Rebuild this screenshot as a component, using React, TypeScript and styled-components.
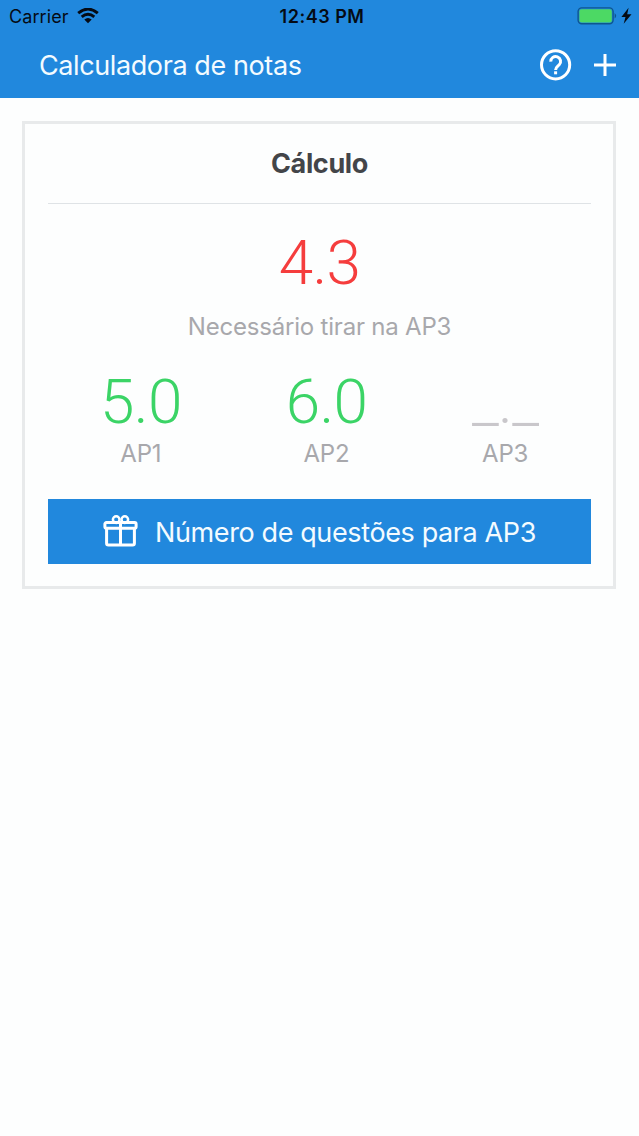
import React from "react";
import styled, { createGlobalStyle } from "styled-components";

const GlobalStyle = createGlobalStyle`
  * { box-sizing: border-box; }
  body { margin: 0; background: #fdfefe; font-family: Inter, "Liberation Sans", sans-serif; }
`;

const Screen = styled.main`
  min-height: 1136px;
  display: flex;
  flex-direction: column;
`;

const Header = styled.header`
  height: 98px;
  background: #2188dd;
`;

const StatusBar = styled.div`
  height: 32px;
  padding: 0 7px 0 9px;
  display: grid;
  grid-template-columns: 1fr auto 1fr;
  align-items: center;
  color: #050b14;
`;

const Carrier = styled.div`
  display: flex;
  align-items: center;
  gap: 8px;
  font-size: 18px;
  letter-spacing: 0.1px;
`;

const Clock = styled.div`
  padding-left: 3px;
  font-size: 18px;
  font-weight: 600;
  letter-spacing: 0.5px;
`;

const Power = styled.div`
  display: flex;
  justify-content: flex-end;
`;

const Toolbar = styled.div`
  height: 66px;
  padding: 0 22px 0 39px;
  display: flex;
  align-items: center;
  color: #fff;
`;

const PageTitle = styled.h1`
  flex: 1;
  margin: 0;
  font-size: 27px;
  font-weight: 400;
  letter-spacing: -0.4px;
  color: #f3fbff;
`;

const IconButton = styled.button`
  margin: 0 0 0 21px;
  padding: 0;
  border: 0;
  background: none;
  color: inherit;
  display: flex;
`;

const Card = styled.section`
  margin: 23px 23px 0 22px;
  height: 468px;
  border: 3px solid #e8eaeb;
  padding: 0 22px 0 23px;
  display: flex;
  flex-direction: column;
`;

const CardTitle = styled.h2`
  margin: 0;
  height: 80px;
  border-bottom: 1px solid #dfe3e6;
  font-size: 27px;
  line-height: 79px;
  font-weight: 700;
  letter-spacing: -0.35px;
  text-align: center;
  color: #434549;
`;

const Grade = styled.div<{ $color: string; $width?: number }>`
  width: ${(p) => (p.$width ? p.$width + "px" : "auto")};
  height: 72px;
  display: flex;
  justify-content: center;
  font-family: Roboto, "Liberation Sans", sans-serif;
  font-size: 62px;
  line-height: 72px;
  font-weight: 300;
  letter-spacing: -0.7px;
  color: ${(p) => p.$color};
`;

const Caption = styled.div`
  height: 30px;
  line-height: 30px;
  font-size: 24px;
  letter-spacing: -0.2px;
  text-align: center;
  color: #a8a8ac;
`;

const Needed = styled.div`
  margin-top: 23px;
  display: flex;
  flex-direction: column;
  gap: 13px;
`;

const Exams = styled.div`
  margin-top: 24px;
  display: flex;
  justify-content: space-around;
`;

const Exam = styled.div`
  display: flex;
  flex-direction: column;
  align-items: center;
  gap: 1px;
`;

const Action = styled.button`
  margin: 30px 0 0;
  padding: 1px 0 0;
  height: 65px;
  border: 0;
  background: #2188dd;
  display: flex;
  align-items: center;
  justify-content: center;
  gap: 17px;
  font: 400 27px Inter, "Liberation Sans", sans-serif;
  letter-spacing: -0.38px;
  white-space: nowrap;
  color: #f3fbff;

  svg {
    margin-bottom: 2px;
  }
`;

const WifiIcon = () => (
  <svg width="22" height="16" viewBox="0 0 22 16" fill="none" stroke="currentColor" strokeWidth="2.9">
    <path d="M1.2 5.2Q11-3 20.8 5.2M4.7 8.8Q11 3.6 17.3 8.8" />
    <path d="M7.3 11.5Q11 8.4 14.7 11.5L11 15.3Z" fill="currentColor" stroke="none" />
  </svg>
);

const BatteryIcon = () => (
  <svg width="55" height="18" viewBox="0 0 55 18">
    <rect x="1.1" y="0.9" width="35" height="15.8" rx="3.6" fill="none" stroke="#0f568f" strokeWidth="1.4" />
    <rect x="2.4" y="2.2" width="32.4" height="13.2" rx="2.2" fill="#4cd964" />
    <path d="M37.6 6q3.2 2.8 0 5.6z" fill="#0f568f" />
    <path d="M51.6 0.8 44.4 9.9h4.1l-1.8 6.9 7.8-9.6h-4.3z" fill="#050b14" />
  </svg>
);

const HelpIcon = () => (
  <svg width="32" height="32" viewBox="0 0 32 32" fill="none" stroke="currentColor" strokeWidth="3">
    <circle cx="15.6" cy="15.8" r="14.1" />
    <path d="M10.8 12.6a4.9 4.9 0 1 1 8.4 3.2c-1.8 1.8-3.6 2.6-3.6 5.2" />
    <path d="M14.1 22.3h3v3h-3z" fill="currentColor" stroke="none" />
  </svg>
);

const PlusIcon = () => (
  <svg width="24" height="24" viewBox="0 0 24 24" fill="none" stroke="currentColor" strokeWidth="3">
    <path d="M12 1v22M1 12h22" />
  </svg>
);

const GiftIcon = () => (
  <svg width="35" height="32" viewBox="0 0 35 32" fill="none" stroke="#fff" strokeWidth="3">
    <rect x="1.9" y="7.6" width="31.2" height="5.6" rx="1.5" />
    <path d="M3.6 13.2v15.1q0 1.8 1.8 1.8h24.2q1.8 0 1.8-1.8V13.2M17.5 7.6v22.5" />
    <circle cx="13.2" cy="4.6" r="3.3" strokeWidth="2.5" />
    <circle cx="21.8" cy="4.6" r="3.3" strokeWidth="2.5" />
  </svg>
);

const exams = [
  { name: "AP1", grade: "5.0", color: "#3bd466", width: 81 },
  { name: "AP2", grade: "6.0", color: "#3bd466", width: 81 },
  { name: "AP3", grade: "_._", color: "#c9c7cb", width: 67 },
];

export default function App() {
  return (
    <Screen>
      <GlobalStyle />
      <Header>
        <StatusBar>
          <Carrier>Carrier <WifiIcon /></Carrier>
          <Clock>12:43 PM</Clock>
          <Power><BatteryIcon /></Power>
        </StatusBar>
        <Toolbar>
          <PageTitle>Calculadora de notas</PageTitle>
          <IconButton aria-label="Ajuda"><HelpIcon /></IconButton>
          <IconButton aria-label="Adicionar"><PlusIcon /></IconButton>
        </Toolbar>
      </Header>
      <Card>
        <CardTitle>Cálculo</CardTitle>
        <Needed>
          <Grade $color="#f53d3d">4.3</Grade>
          <Caption>Necessário tirar na AP3</Caption>
        </Needed>
        <Exams>
          {exams.map((e) => (
            <Exam key={e.name}>
              <Grade $color={e.color} $width={e.width}>{e.grade}</Grade>
              <Caption>{e.name}</Caption>
            </Exam>
          ))}
        </Exams>
        <Action><GiftIcon />Número de questões para AP3</Action>
      </Card>
    </Screen>
  );
}
